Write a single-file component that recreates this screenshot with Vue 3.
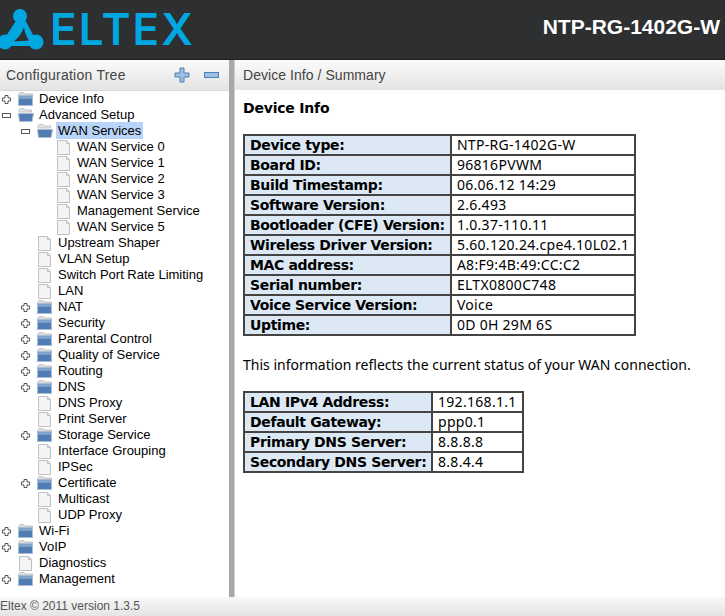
<script setup>
const tree = [
  { t: 'Device Info', l: 0, k: 'f', s: '+' },
  { t: 'Advanced Setup', l: 0, k: 'o', s: '-' },
  { t: 'WAN Services', l: 1, k: 'o', s: '-', sel: true },
  { t: 'WAN Service 0', l: 2, k: 'p' },
  { t: 'WAN Service 1', l: 2, k: 'p' },
  { t: 'WAN Service 2', l: 2, k: 'p' },
  { t: 'WAN Service 3', l: 2, k: 'p' },
  { t: 'Management Service', l: 2, k: 'p' },
  { t: 'WAN Service 5', l: 2, k: 'p' },
  { t: 'Upstream Shaper', l: 1, k: 'p' },
  { t: 'VLAN Setup', l: 1, k: 'p' },
  { t: 'Switch Port Rate Limiting', l: 1, k: 'p' },
  { t: 'LAN', l: 1, k: 'p' },
  { t: 'NAT', l: 1, k: 'f', s: '+' },
  { t: 'Security', l: 1, k: 'f', s: '+' },
  { t: 'Parental Control', l: 1, k: 'f', s: '+' },
  { t: 'Quality of Service', l: 1, k: 'f', s: '+' },
  { t: 'Routing', l: 1, k: 'f', s: '+' },
  { t: 'DNS', l: 1, k: 'f', s: '+' },
  { t: 'DNS Proxy', l: 1, k: 'p' },
  { t: 'Print Server', l: 1, k: 'p' },
  { t: 'Storage Service', l: 1, k: 'f', s: '+' },
  { t: 'Interface Grouping', l: 1, k: 'p' },
  { t: 'IPSec', l: 1, k: 'p' },
  { t: 'Certificate', l: 1, k: 'f', s: '+' },
  { t: 'Multicast', l: 1, k: 'p' },
  { t: 'UDP Proxy', l: 1, k: 'p' },
  { t: 'Wi-Fi', l: 0, k: 'f', s: '+' },
  { t: 'VoIP', l: 0, k: 'f', s: '+' },
  { t: 'Diagnostics', l: 0, k: 'p' },
  { t: 'Management', l: 0, k: 'f', s: '+' },
]
const info = [
  ['Device type:', 'NTP-RG-1402G-W'],
  ['Board ID:', '96816PVWM'],
  ['Build Timestamp:', '06.06.12 14:29'],
  ['Software Version:', '2.6.493'],
  ['Bootloader (CFE) Version:', '1.0.37-110.11'],
  ['Wireless Driver Version:', '5.60.120.24.cpe4.10L02.1'],
  ['MAC address:', 'A8:F9:4B:49:CC:C2'],
  ['Serial number:', 'ELTX0800C748'],
  ['Voice Service Version:', 'Voice'],
  ['Uptime:', '0D 0H 29M 6S'],
]
const net = [
  ['LAN IPv4 Address:', '192.168.1.1'],
  ['Default Gateway:', 'ppp0.1'],
  ['Primary DNS Server:', '8.8.8.8'],
  ['Secondary DNS Server:', '8.8.4.4'],
]
</script>

<template>
  <div class="page">
    <header class="top">
      <svg class="mark" width="50" height="44" viewBox="0 0 50 44">
        <path d="M19 9 L1 37 L38 37 L23 9 Z M23 25 L15 34 L28 33 Z" fill="#00a7e0" fill-rule="evenodd" />
        <path d="M10 36 Q20 33 30 36 L30 39 L10 39 Z" fill="#00a7e0" />
        <path d="M24 20 Q21 29 14 34.500 L29 33.500 Q25 28 24 20 Z" fill="#2e2f31" />
        <circle cx="20" cy="9" r="7" fill="#00a7e0" />
        <circle cx="5" cy="35" r="7.500" fill="#00a7e0" />
        <circle cx="36" cy="35" r="7.500" fill="#00a7e0" />
      </svg>
      <span class="word">ELTEX</span>
      <span class="model">NTP-RG-1402G-W</span>
    </header>
    <div class="body">
      <aside class="side">
        <div class="side-head">
          <span class="side-title">Configuration Tree</span>
          <svg class="ctl plus" width="16" height="16" viewBox="0 0 16 16">
            <path d="M6 1h4v5h5v4h-5v5H6v-5H1V6h5z" fill="#9dbfe3" stroke="#4f7fb5" />
          </svg>
          <svg class="ctl minus" width="15" height="6" viewBox="0 0 15 6">
            <rect x="0.5" y="0.5" width="14" height="5" fill="#9dbfe3" stroke="#4f7fb5" />
          </svg>
        </div>
        <ul class="tree">
          <li v-for="n in tree" :key="n.t" class="row" :class="'lv' + n.l">
            <span class="tog">
              <svg v-if="n.s === '+'" width="9" height="9" viewBox="0 0 9 9">
                <path d="M3 .5h3v2.500h2.500v3H6v2.500H3V6H.5V3H3z" fill="#fff" stroke="#555" />
              </svg>
              <svg v-else-if="n.s === '-'" width="9" height="5" viewBox="0 0 9 5">
                <rect x=".5" y=".5" width="8" height="4" fill="#fff" stroke="#555" />
              </svg>
            </span>
            <svg v-if="n.k === 'f'" class="ico" width="16" height="14" viewBox="0 0 16 14">
              <path d="M1 3V1.500L2 .5h4l1.500 1.500H14.500V3z" fill="#e4e4e4" stroke="#c4c4c4" />
              <rect x=".5" y="3.500" width="14" height="10" fill="#4f7db3" stroke="#a9bdd4" />
              <rect x="1" y="4" width="13" height="3" fill="#7fa1c8" />
            </svg>
            <svg v-else-if="n.k === 'o'" class="ico" width="16" height="14" viewBox="0 0 16 14">
              <path d="M1 4V1.500L2 .5h4l1.500 1.500H13.500V4z" fill="#e4e4e4" stroke="#c4c4c4" />
              <path d="M.5 5.500h15L14 13.500H1.500z" fill="#4f7db3" stroke="#a9bdd4" />
            </svg>
            <svg v-else class="ico" width="16" height="15" viewBox="0 0 16 15">
              <path d="M1.500 .5h9l3 3v11h-12z" fill="#f4f4f4" stroke="#c0c0c0" />
              <path d="M10.500 .5v3h3" fill="none" stroke="#c0c0c0" />
            </svg>
            <span class="lbl" :class="{ sel: n.sel }">{{ n.t }}</span>
          </li>
        </ul>
      </aside>
      <div class="split"></div>
      <main class="main">
        <div class="crumb">Device Info / Summary</div>
        <div class="content">
          <h1>Device Info</h1>
          <table class="t1">
            <tbody>
              <tr v-for="r in info" :key="r[0]">
                <th>{{ r[0] }}</th>
                <td>{{ r[1] }}</td>
              </tr>
            </tbody>
          </table>
          <p>This information reflects the current status of your WAN connection.</p>
          <table class="t2">
            <tbody>
              <tr v-for="r in net" :key="r[0]">
                <th>{{ r[0] }}</th>
                <td>{{ r[1] }}</td>
              </tr>
            </tbody>
          </table>
        </div>
      </main>
    </div>
    <footer class="foot">Eltex © 2011 version 1.3.5</footer>
  </div>
</template>

<style scoped>
.page { width: 725px; height: 616px; display: flex; flex-direction: column; overflow: hidden; background: #fff; font-family: "Liberation Sans", Arial, sans-serif; }
.top { height: 60px; flex: none; background: #2e2f31; border-bottom: 1px solid #1e1e1e; box-sizing: border-box; display: flex; align-items: center; padding: 0 5px 0 0; }
.mark { flex: none; margin-top: -1px; }
.word { color: #00a7e0; font-family: Inter, sans-serif; font-weight: 600; font-size: 44px; line-height: 44px; letter-spacing: 2px; margin-top: -1px; }
.model { margin-left: auto; color: #fff; font-weight: 700; font-size: 21px; margin-top: -5px; }
.body { flex: 1; display: flex; min-height: 0; }
.side { width: 229px; flex: none; display: flex; flex-direction: column; }
.side-head { height: 31px; flex: none; box-sizing: border-box; display: flex; align-items: center; padding-left: 6px; background: linear-gradient(#fbfbfb, #e4e4e4); border-bottom: 1px solid #d8d8d8; }
.side-title { font-size: 14px; letter-spacing: 0.25px; color: #444; flex: 1; }
.ctl { flex: none; }
.plus { margin-right: 14px; }
.minus { margin-right: 10px; }
.tree { list-style: none; margin: 0; padding: 0; }
.row { height: 16px; display: flex; align-items: center; font-size: 13px; color: #000; white-space: nowrap; }
.lv0 { padding-left: 2px; }
.lv1 { padding-left: 21px; }
.lv2 { padding-left: 40px; }
.tog { width: 16px; flex: none; display: flex; align-items: center; }
.ico { flex: none; margin-right: 5px; }
.lbl { padding: 1px 2px 1px 0; margin-bottom: 2px; }
.sel { background: #b9d4f9; margin-left: -2px; padding-left: 2px; }
.split { width: 6px; flex: none; background: #a8a8a8; border-right: 1px solid #d0d0d0; box-sizing: border-box; }
.main { flex: 1; min-width: 0; }
.crumb { height: 30px; box-sizing: border-box; padding: 0 8px; display: flex; align-items: center; font-size: 14px; letter-spacing: 0.05px; color: #444; background: linear-gradient(#fbfbfb, #e4e4e4); }
.content { padding: 0 8px; font-family: "Noto Sans", sans-serif; font-size: 14px; color: #000; }
h1 { font-family: "DejaVu Sans", sans-serif; font-size: 14px; letter-spacing: -0.2px; font-weight: 700; margin: 9px 0 17px; line-height: 18px; }
table { border-collapse: collapse; border: 2px solid #444; }
th, td { border: 2px solid #444; height: 18px; padding: 0 5px; font-size: 14px; line-height: 18px; text-align: left; white-space: nowrap; }
td { letter-spacing: 0.3px; }
th { background: #dce9f5; font-family: "DejaVu Sans", sans-serif; font-weight: 700; letter-spacing: -0.35px; }
.t1 th { width: 190px; }
.t1 td { width: 172px; }
.t2 th { width: 178px; padding-right: 3px; }
.t2 td { width: 78px; }
p { margin: 20px 0 17px; line-height: 18px; font-size: 14px; white-space: nowrap; }
.foot { height: 19px; flex: none; background: linear-gradient(#f8f8f8, #e4e4e4); font-size: 12px; color: #555; display: flex; align-items: center; padding-bottom: 2px; box-sizing: border-box; }
</style>
